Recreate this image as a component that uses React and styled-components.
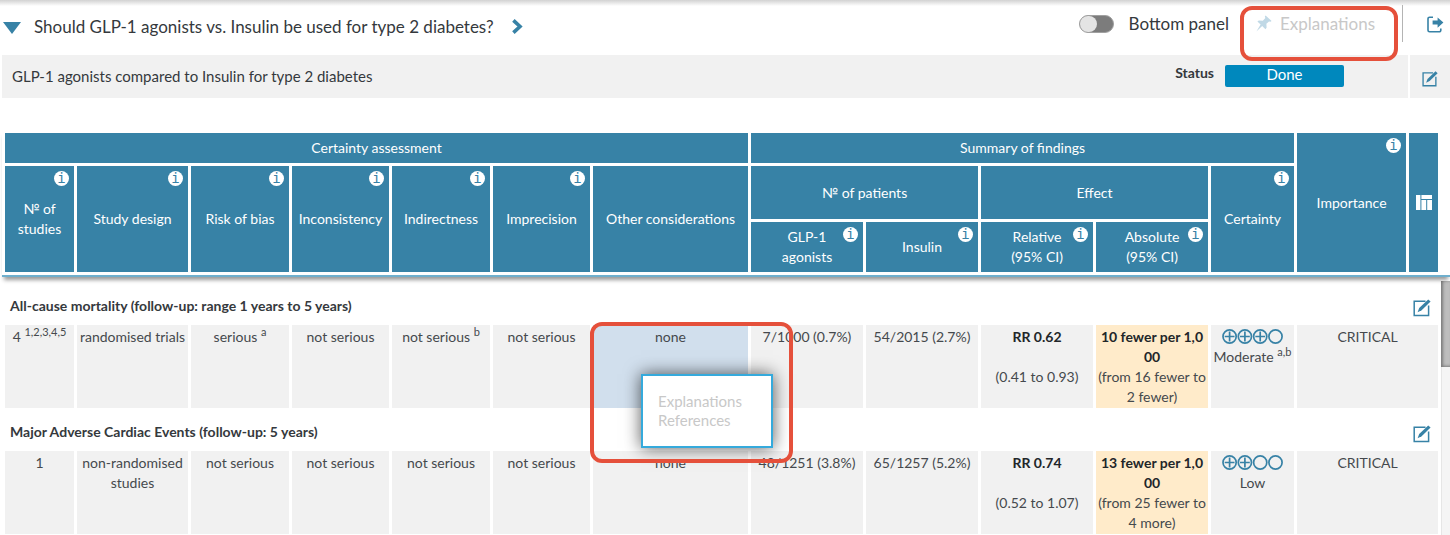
import React, { useState } from "react";
import styled, { createGlobalStyle, css } from "styled-components";

const GlobalStyle = createGlobalStyle`
  :root {
    --main-color: #3782a6;
    --status-color: #0088bd;
    --text-color: #35393d;
    --cell-color: #f1f1f1;
    --mark-color: #e5503b;
  }

  * {
    box-sizing: border-box;
  }

  body {
    margin: 0;
    background: #fff;
    color: var(--text-color);
    font-family: Lato, "Noto Sans", sans-serif;
    font-size: 14px;
    line-height: 20px;
  }

  button {
    padding: 0;
    border: none;
    background: none;
    color: inherit;
    font: inherit;
  }

  svg {
    display: block;
  }
`;

const Page = styled.div`
  display: flex;
  flex-direction: column;
  height: 100vh;
  overflow: hidden;
`;

const TopBar = styled.header`
  display: flex;
  align-items: center;
  height: 55px;
  padding: 0 6px 8px 3px;
  background: linear-gradient(#d2d2d2, #fff 6px);
`;

const Title = styled.h1`
  margin: 6px 18px 0 13px;
  font-size: 17px;
  font-weight: 400;
`;

const IconButton = styled.button`
  color: var(--main-color);
  margin-top: ${(p) => p.$top || 0}px;
`;

const Tools = styled.div`
  display: flex;
  align-items: center;
  margin-left: auto;
  font-size: 17px;
`;

const SwitchLabel = styled.label`
  display: flex;
  align-items: center;
  gap: 15px;
`;

const Switch = styled.input`
  appearance: none;
  display: flex;
  justify-content: ${(p) => (p.checked ? "flex-end" : "flex-start")};
  width: 35px;
  height: 18px;
  margin: 0;
  border: 1px solid #a0a0a0;
  border-radius: 9px;
  background: #7c7c7c;

  &::before {
    content: "";
    width: 17px;
    height: 16px;
    border-radius: 8px;
    background: #e4e4e4;
  }
`;

const ExplanationsWrap = styled.div`
  position: relative;
  margin-left: 27px;
  padding-right: 27px;
  border-right: 1px solid #b4b4b4;
`;

const ExplanationsButton = styled.button`
  display: flex;
  align-items: center;
  gap: 8px;
  height: 37px;
  color: #c8c8c8;

  svg {
    color: #c1d9e6;
  }
`;

const Highlight = styled.div`
  position: absolute;
  z-index: 3;
  border: 4px solid var(--mark-color);
  border-radius: 12px;
  pointer-events: none;
  ${(p) =>
    p.$kind === "tool"
      ? css`
          top: 1px;
          left: -16px;
          right: 4px;
          height: 55px;
        `
      : css`
          top: -3px;
          left: -3px;
          width: 203px;
          height: 141px;
        `}
`;

const ExportButton = styled(IconButton)`
  margin: 2px 0 0 24px;
`;

const SubBar = styled.section`
  display: flex;
  height: 43px;
  margin-left: 2px;
  gap: 2px;
`;

const SubMain = styled.div`
  display: flex;
  flex: 1;
  align-items: center;
  padding: 0 64px 2px 10px;
  background: var(--cell-color);
`;

const SubTitle = styled.h2`
  margin: 0 auto 0 0;
  font-size: 15px;
  font-weight: 400;
`;

const StatusLabel = styled.strong`
  margin: 0 11px 6px 0;
`;

const StatusButton = styled.button`
  width: 119px;
  height: 22px;
  padding-bottom: 3px;
  border-radius: 2px;
  background: var(--status-color);
  color: #fff;
  font-size: 15px;
  line-height: 18px;
`;

const SubSide = styled.div`
  display: flex;
  justify-content: center;
  align-items: center;
  width: 40px;
  background: var(--cell-color);
`;

const HeadPanel = styled.div`
  position: relative;
  z-index: 1;
  margin: 32px 0 0 2px;
  padding-right: 9px;
  background: #fff;
  border-bottom: 2px solid #6fafcd;
  box-shadow: 0 5px 4px -2px rgba(0, 0, 0, 0.4);
`;

const Grid = styled.table`
  width: 100%;
  table-layout: fixed;
  border-collapse: separate;
  border-spacing: 3px;
`;

const HeadCell = styled.th`
  position: relative;
  height: ${(p) => p.$h}px;
  padding: 0;
  background: var(--main-color);
  color: #fff;
  font-weight: 400;
  vertical-align: middle;
`;

const InfoButton = styled.button`
  position: absolute;
  top: 5px;
  right: 5px;
  width: 15px;
  height: 15px;
  border-radius: 50%;
  background: #fff;
  color: var(--main-color);
  font-family: "DejaVu Sans Mono", monospace;
  font-size: 14px;
  line-height: 15px;
`;

const ColumnsButton = styled.button`
  display: flex;
  justify-content: center;
  width: 100%;
`;

const BodyPanel = styled.div`
  display: flex;
  flex: 1;
  min-height: 0;
  margin-left: 2px;
`;

const Scroller = styled.div`
  flex: 1;
  overflow-y: auto;
  scrollbar-width: none;
  padding-top: 5px;
`;

const ScrollTrack = styled.div`
  width: 9px;
  margin-top: 4px;
  background: #f5f5f5;
  border-left: 1px solid #e6e6e6;
`;

const ScrollThumb = styled.div`
  height: 86px;
  margin-left: -1px;
  background: #bdbdbd;
  box-shadow: inset 2px -1px 3px rgba(0, 0, 0, 0.35);
`;

const OutcomeCell = styled.th`
  height: 37px;
  padding: 4px 7px 0 5px;
  text-align: left;
`;

const OutcomeRow = styled.div`
  display: flex;
  justify-content: space-between;
  align-items: center;
`;

const Cell = styled.td`
  position: relative;
  height: 83px;
  padding: 2px 1px 1px;
  background: ${(p) =>
    p.$tone === "selected" ? "#d1dfed" : p.$tone === "warm" ? "#ffebca" : "var(--cell-color)"};
  color: #45494d;
  text-align: center;
  vertical-align: top;

  strong {
    display: block;
    color: #222629;
  }

  sup {
    font-size: 11px;
    line-height: 0;
  }
`;

const Amount = styled.strong`
  padding: 0 2px;
  word-break: break-all;
`;

const Interval = styled.span`
  display: block;
  padding-top: ${(p) => (p.$gap ? 20 : 0)}px;
`;

const Rating = styled.svg`
  margin: 2px auto 3px;
`;

const Menu = styled.div`
  position: absolute;
  z-index: 2;
  top: 49px;
  left: 48px;
  display: flex;
  flex-direction: column;
  align-items: flex-start;
  width: 132px;
  height: 74px;
  padding: 16px 15px;
  border: 2px solid #35aadc;
  background: #fff;
  box-shadow: 0 0 16px rgba(0, 0, 0, 0.65);
`;

const MenuItem = styled.button`
  color: #c8c8c8;
  font-size: 15px;
  line-height: 19px;
`;

const widths = [69, 111, 98, 97, 98, 97, 155, 112, 112, 112, 112, 83, 109, 29];

const outcomes = [
  {
    title: "All-cause mortality (follow-up: range 1 years to 5 years)",
    studies: ["4", "1,2,3,4,5"],
    design: "randomised trials",
    ratings: [["serious", "a"], ["not serious"], ["not serious", "b"], ["not serious"]],
    other: "none",
    menu: true,
    patients: ["7/1000 (0.7%)", "54/2015 (2.7%)"],
    relative: ["RR 0.62", "(0.41 to 0.93)"],
    absolute: ["10 fewer per 1,000", "(from 16 fewer to 2 fewer)"],
    score: 3,
    certainty: ["Moderate", "a,b"],
    importance: "CRITICAL",
  },
  {
    title: "Major Adverse Cardiac Events (follow-up: 5 years)",
    studies: ["1"],
    design: "non-randomised studies",
    ratings: [["not serious"], ["not serious"], ["not serious"], ["not serious"]],
    other: "none",
    patients: ["48/1251 (3.8%)", "65/1257 (5.2%)"],
    relative: ["RR 0.74", "(0.52 to 1.07)"],
    absolute: ["13 fewer per 1,000", "(from 25 fewer to 4 more)"],
    score: 2,
    certainty: ["Low"],
    importance: "CRITICAL",
  },
];

const EditIcon = ({ size = 18 }) => (
  <svg width={size} height={size} viewBox="0 0 18 18" fill="none">
    <path d="M12.5 2.2H1.2v14.4h14.4V6.5" stroke="currentColor" strokeWidth="1.5" />
    <path d="M15.2.4 17.6 2.6 8.6 11.2 4.6 13.2 6.2 9z" fill="currentColor" />
  </svg>
);

const ExportIcon = () => (
  <svg width="17" height="17" viewBox="0 0 17 17" fill="none">
    <path
      d="M6 1.2H2.6A1.6 1.6 0 0 0 1 2.8v11.4a1.6 1.6 0 0 0 1.6 1.6h9.6a1.6 1.6 0 0 0 1.6-1.6V12.6"
      stroke="currentColor"
      strokeWidth="1.6"
    />
    <path d="M5.6 4.6h5V1.4l5.8 5.2-5.8 5.2V8.6h-5z" fill="currentColor" />
  </svg>
);

const PinIcon = () => (
  <svg width="16" height="17" viewBox="0 0 16 17" fill="currentColor">
    <path d="M9.6.6 15.6 6l-1.2.8-1.4-.4-2.6 2.4.2 4-1.2 1.4-3.2-3.2L.4 16.4l4.2-6.8L1.4 6.6l1.4-1 4 .2 2.6-2.8-.6-1.4z" />
  </svg>
);

const ColumnsIcon = () => (
  <svg width="16" height="15" viewBox="0 0 16 15" fill="#fff">
    <path d="M0 0h4.4v15H0zM5.4 0H16v4H5.4zM5.4 5h4.8v10H5.4zM11.2 5H16v10h-4.8z" />
  </svg>
);

function Certainty({ score }) {
  return (
    <Rating width="62" height="15" viewBox="0 0 62 15" fill="none" stroke="#3782a6" strokeWidth="1.7">
      {[0, 1, 2, 3].map((i) => (
        <g key={i} transform={`translate(${i * 15.3} 0)`}>
          <circle cx="7.6" cy="7.5" r="6.6" />
          {i < score && <path d="M7.6 2.6v9.8M2.7 7.5h9.8" />}
        </g>
      ))}
    </Rating>
  );
}

function Noted({ value }) {
  const [text, note] = value;
  return (
    <>
      {text}
      {note && <> <sup>{note}</sup></>}
    </>
  );
}

function Head({ children, info, h, ...rest }) {
  return (
    <HeadCell $h={h} {...rest}>
      {children}
      {info && <InfoButton aria-label="Info">i</InfoButton>}
    </HeadCell>
  );
}

const Columns = () => (
  <colgroup>
    {widths.map((w, i) => (
      <col key={i} width={w} />
    ))}
  </colgroup>
);

function TableHead() {
  return (
    <HeadPanel>
      <Grid>
        <Columns />
        <thead>
          <tr>
            <Head colSpan={7} h={30}>Certainty assessment</Head>
            <Head colSpan={5} h={30}>Summary of findings</Head>
            <Head rowSpan={3} info>Importance</Head>
            <Head rowSpan={3}>
              <ColumnsButton aria-label="Columns">
                <ColumnsIcon />
              </ColumnsButton>
            </Head>
          </tr>
          <tr>
            <Head rowSpan={2} info>№ of<br />studies</Head>
            <Head rowSpan={2} info>Study design</Head>
            <Head rowSpan={2} info>Risk of bias</Head>
            <Head rowSpan={2} info>Inconsistency</Head>
            <Head rowSpan={2} info>Indirectness</Head>
            <Head rowSpan={2} info>Imprecision</Head>
            <Head rowSpan={2}>Other considerations</Head>
            <Head colSpan={2} h={53}>№ of patients</Head>
            <Head colSpan={2} h={53}>Effect</Head>
            <Head rowSpan={2} info>Certainty</Head>
          </tr>
          <tr>
            <Head h={50} info>GLP-1<br />agonists</Head>
            <Head h={50} info>Insulin</Head>
            <Head h={50} info>Relative<br />(95% CI)</Head>
            <Head h={50} info>Absolute<br />(95% CI)</Head>
          </tr>
        </thead>
      </Grid>
    </HeadPanel>
  );
}

function Outcome({ item }) {
  return (
    <>
      <tr>
        <OutcomeCell colSpan={14}>
          <OutcomeRow>
            {item.title}
            <IconButton $top={4} aria-label="Edit outcome">
              <EditIcon />
            </IconButton>
          </OutcomeRow>
        </OutcomeCell>
      </tr>
      <tr>
        <Cell><Noted value={item.studies} /></Cell>
        <Cell>{item.design}</Cell>
        {item.ratings.map((r, i) => (
          <Cell key={i}><Noted value={r} /></Cell>
        ))}
        <Cell $tone={item.menu && "selected"}>
          {item.other}
          {item.menu && (
            <>
              <Menu>
                <MenuItem>Explanations</MenuItem>
                <MenuItem>References</MenuItem>
              </Menu>
              <Highlight $kind="menu" />
            </>
          )}
        </Cell>
        {item.patients.map((p) => (
          <Cell key={p}>{p}</Cell>
        ))}
        <Cell>
          <strong>{item.relative[0]}</strong>
          <Interval $gap>{item.relative[1]}</Interval>
        </Cell>
        <Cell $tone="warm">
          <Amount>{item.absolute[0]}</Amount>
          <Interval>{item.absolute[1]}</Interval>
        </Cell>
        <Cell>
          <Certainty score={item.score} />
          <Noted value={item.certainty} />
        </Cell>
        <Cell colSpan={2}>{item.importance}</Cell>
      </tr>
    </>
  );
}

function App() {
  const [bottomPanel, setBottomPanel] = useState(false);

  return (
    <Page>
      <GlobalStyle />
      <TopBar>
        <IconButton $top={8} aria-label="Collapse">
          <svg width="18" height="12" viewBox="0 0 18 12" fill="currentColor">
            <path d="M0 0h18L9 12z" />
          </svg>
        </IconButton>
        <Title>Should GLP-1 agonists vs. Insulin be used for type 2 diabetes?</Title>
        <IconButton $top={6} aria-label="Next question">
          <svg width="11" height="15" viewBox="0 0 11 15" fill="none">
            <path d="M1.4 1.4 8 7.5 1.4 13.6" stroke="currentColor" strokeWidth="3.6" />
          </svg>
        </IconButton>
        <Tools>
          <SwitchLabel>
            <Switch
              type="checkbox"
              checked={bottomPanel}
              onChange={(e) => setBottomPanel(e.target.checked)}
            />
            Bottom panel
          </SwitchLabel>
          <ExplanationsWrap>
            <ExplanationsButton>
              <PinIcon />
              Explanations
            </ExplanationsButton>
            <Highlight $kind="tool" />
          </ExplanationsWrap>
          <ExportButton aria-label="Export">
            <ExportIcon />
          </ExportButton>
        </Tools>
      </TopBar>
      <SubBar>
        <SubMain>
          <SubTitle>GLP-1 agonists compared to Insulin for type 2 diabetes</SubTitle>
          <StatusLabel>Status</StatusLabel>
          <StatusButton>Done</StatusButton>
        </SubMain>
        <SubSide>
          <IconButton $top={4} aria-label="Edit question">
            <EditIcon size={16} />
          </IconButton>
        </SubSide>
      </SubBar>
      <TableHead />
      <BodyPanel>
        <Scroller>
          <Grid>
            <Columns />
            <tbody>
              {outcomes.map((o) => (
                <Outcome key={o.title} item={o} />
              ))}
            </tbody>
          </Grid>
        </Scroller>
        <ScrollTrack>
          <ScrollThumb />
        </ScrollTrack>
      </BodyPanel>
    </Page>
  );
}

export default App;
